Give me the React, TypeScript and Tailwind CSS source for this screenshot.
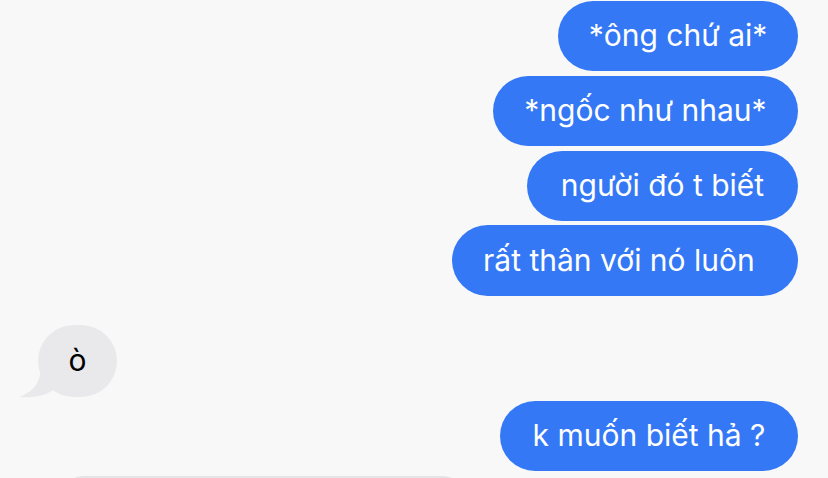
import React from "react";

const Blue = ({ text, w, mt = "mt-[5px]" }: { text: string; w: string; mt?: string }) => (
  <div className={`${mt} ${w} h-[70px] rounded-full bg-[#3478F6] text-white flex items-center justify-center text-[30px] leading-none`}>
    <span className="-mt-[2px] whitespace-pre">{text}</span>
  </div>
);

export default function App() {
  return (
    <div className="w-[828px] h-[478px] overflow-hidden bg-[#F8F8F9] relative" style={{ fontFamily: "Inter, 'Noto Sans', sans-serif" }}>
      <div className="flex flex-col items-end pr-[30px] pt-[1px]">
        <Blue text="*ông chứ ai*" w="w-[240px]" mt="mt-0" />
        <Blue text="*ngốc như nhau*" w="w-[305px]" mt="mt-[5px]" />
        <Blue text="người đó t biết" w="w-[271px]" mt="mt-[5px]" />
        <div className="mt-[4px] w-[346px] h-[71px] rounded-full bg-[#3478F6] text-white flex items-center pl-[31px] text-[30px] leading-none">
          <span className="-mt-[2px]">rất thân với nó luôn</span>
        </div>
      </div>
      <div className="pl-[38px] mt-[29px] relative">
        <div className="relative w-[79px] h-[72px]">
          <svg className="absolute left-[-19px] top-[40px]" width="50" height="34" viewBox="0 0 50 34">
            <path d="M22 0 C22 18 14 27 0 32 C14 33 26 31 34 25 L40 10 Z" fill="#E9E9EB" />
          </svg>
          <div className="absolute inset-0 rounded-full bg-[#E9E9EB] flex items-center justify-center text-[30px] leading-none text-black">
            <span className="-mt-[2px]">ò</span>
          </div>
        </div>
      </div>
      <div className="flex flex-col items-end pr-[30px] mt-[4px]">
        <Blue text="k muốn biết hả ?" w="w-[298px]" mt="mt-0" />
      </div>
      <div className="absolute left-[63px] top-[476px] w-[400px] h-[40px] rounded-[20px] bg-[#E4E4E7]" />
    </div>
  );
}
